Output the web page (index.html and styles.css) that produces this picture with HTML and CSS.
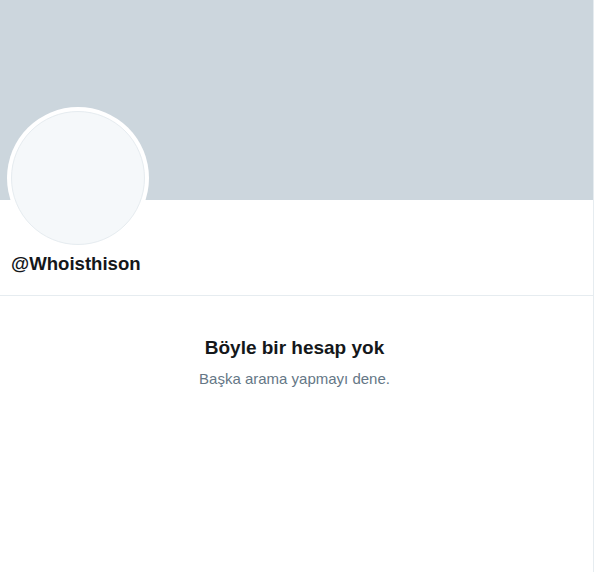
FILE: index.html
```html
<!DOCTYPE html>
<html lang="tr">
<head>
<meta charset="utf-8">
<link rel="stylesheet" href="styles.css">
</head>
<body>
<div class="page">
  <div class="banner"></div>
  <div class="profile">
    <div class="avatar"><div class="avatar-inner"></div></div>
    <div class="handle">@Whoisthison</div>
  </div>
  <div class="empty">
    <div class="title">Böyle bir hesap yok</div>
    <div class="sub">Başka arama yapmayı dene.</div>
  </div>
</div>
</body>
</html>
```
FILE: styles.css
```css
html, body {
  margin: 0;
  padding: 0;
  background: #ffffff;
  font-family: "Liberation Sans", Arial, sans-serif;
}
.page {
  width: 593px;
  min-height: 572px;
  border-right: 1px solid #e6ecf0;
}
.banner {
  height: 200px;
  background: #ccd6dd;
}
.profile {
  display: flex;
  flex-direction: column;
  padding: 0 11px;
  height: 95px;
  border-bottom: 1px solid #e6ecf0;
}
.avatar {
  width: 142px;
  height: 142px;
  margin-top: -93px;
  margin-left: -4px;
  border-radius: 50%;
  background: #ffffff;
  display: flex;
  align-items: center;
  justify-content: center;
}
.avatar-inner {
  width: 132px;
  height: 132px;
  border-radius: 50%;
  background: #f5f8fa;
  border: 1px solid #e6ecf0;
}
.handle {
  margin-top: 3px;
  font-size: 18.6px;
  font-weight: bold;
  color: #14171a;
  line-height: 24px;
}
.empty {
  display: flex;
  flex-direction: column;
  align-items: center;
  padding-top: 40px;
  padding-right: 4px;
}
.title {
  font-size: 19px;
  font-weight: bold;
  color: #14171a;
  line-height: 24px;
}
.sub {
  margin-top: 9px;
  font-size: 15px;
  color: #657786;
  line-height: 20px;
}
```
